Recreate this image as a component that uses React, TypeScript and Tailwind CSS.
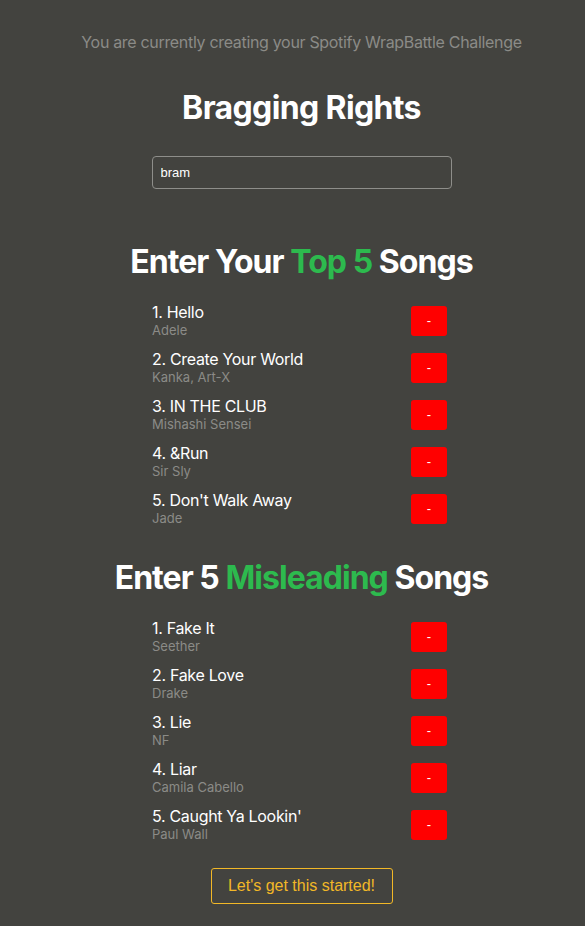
import React from 'react';

type Song = { title: string; artist: string };

const topSongs: Song[] = [
  { title: 'Hello', artist: 'Adele' },
  { title: 'Create Your World', artist: 'Kanka, Art-X' },
  { title: 'IN THE CLUB', artist: 'Mishashi Sensei' },
  { title: '&Run', artist: 'Sir Sly' },
  { title: "Don't Walk Away", artist: 'Jade' },
];

const fakeSongs: Song[] = [
  { title: 'Fake It', artist: 'Seether' },
  { title: 'Fake Love', artist: 'Drake' },
  { title: 'Lie', artist: 'NF' },
  { title: 'Liar', artist: 'Camila Cabello' },
  { title: "Caught Ya Lookin'", artist: 'Paul Wall' },
];

const SongList = ({ songs }: { songs: Song[] }) => (
  <ul className="w-[295px] flex flex-col gap-[10px]">
    {songs.map((s, i) => (
      <li key={i} className="flex items-center justify-between">
        <div className="flex flex-col">
          <span className="text-[16px] leading-[20px] tracking-[-0.02em] text-white">{i + 1}. {s.title}</span>
          <span className="text-[13px] leading-[17px] text-[#8b8b87]">{s.artist}</span>
        </div>
        <button className="w-[36px] h-[30px] rounded-[3px] bg-[#ff0000] text-white text-[13px] font-['Liberation_Sans',Arial,sans-serif]">
          -
        </button>
      </li>
    ))}
  </ul>
);

export default function App() {
  return (
    <div className="min-h-screen w-full bg-[#43433f] flex flex-col items-center font-['Inter',sans-serif] pt-[30px] pb-[22px] pl-[18px]">
      <p className="text-[16px] leading-[24px] tracking-[-0.02em] text-[#8b8b87]">
        You are currently creating your Spotify WrapBattle Challenge
      </p>

      <h1 className="mt-[34px] text-[32px] leading-[40px] font-bold tracking-[-0.02em] text-white">Bragging Rights</h1>

      <input
        defaultValue="bram"
        className="mt-[28px] w-[300px] h-[33px] rounded-[4px] border border-[#8e8e8a] bg-transparent px-[8px] text-[13px] text-white outline-none font-['Liberation_Sans',Arial,sans-serif]"
      />

      <h2 className="mt-[53px] text-[32px] leading-[40px] font-bold tracking-[-0.03em] text-white">
        Enter Your <span className="text-[#2dba4e]">Top 5</span> Songs
      </h2>
      <div className="mt-[20px] mr-[4px]">
        <SongList songs={topSongs} />
      </div>

      <h2 className="mt-[31px] text-[32px] leading-[40px] font-bold tracking-[-0.03em] text-white">
        Enter 5 <span className="text-[#2dba4e]">Misleading</span> Songs
      </h2>
      <div className="mt-[20px] mr-[4px]">
        <SongList songs={fakeSongs} />
      </div>

      <button className="mt-[25px] w-[182px] h-[36px] rounded-[3px] border border-[#f2b827] text-[#f2b827] text-[16px] font-['Liberation_Sans',Arial,sans-serif]">
        Let's get this started!
      </button>
    </div>
  );
}
